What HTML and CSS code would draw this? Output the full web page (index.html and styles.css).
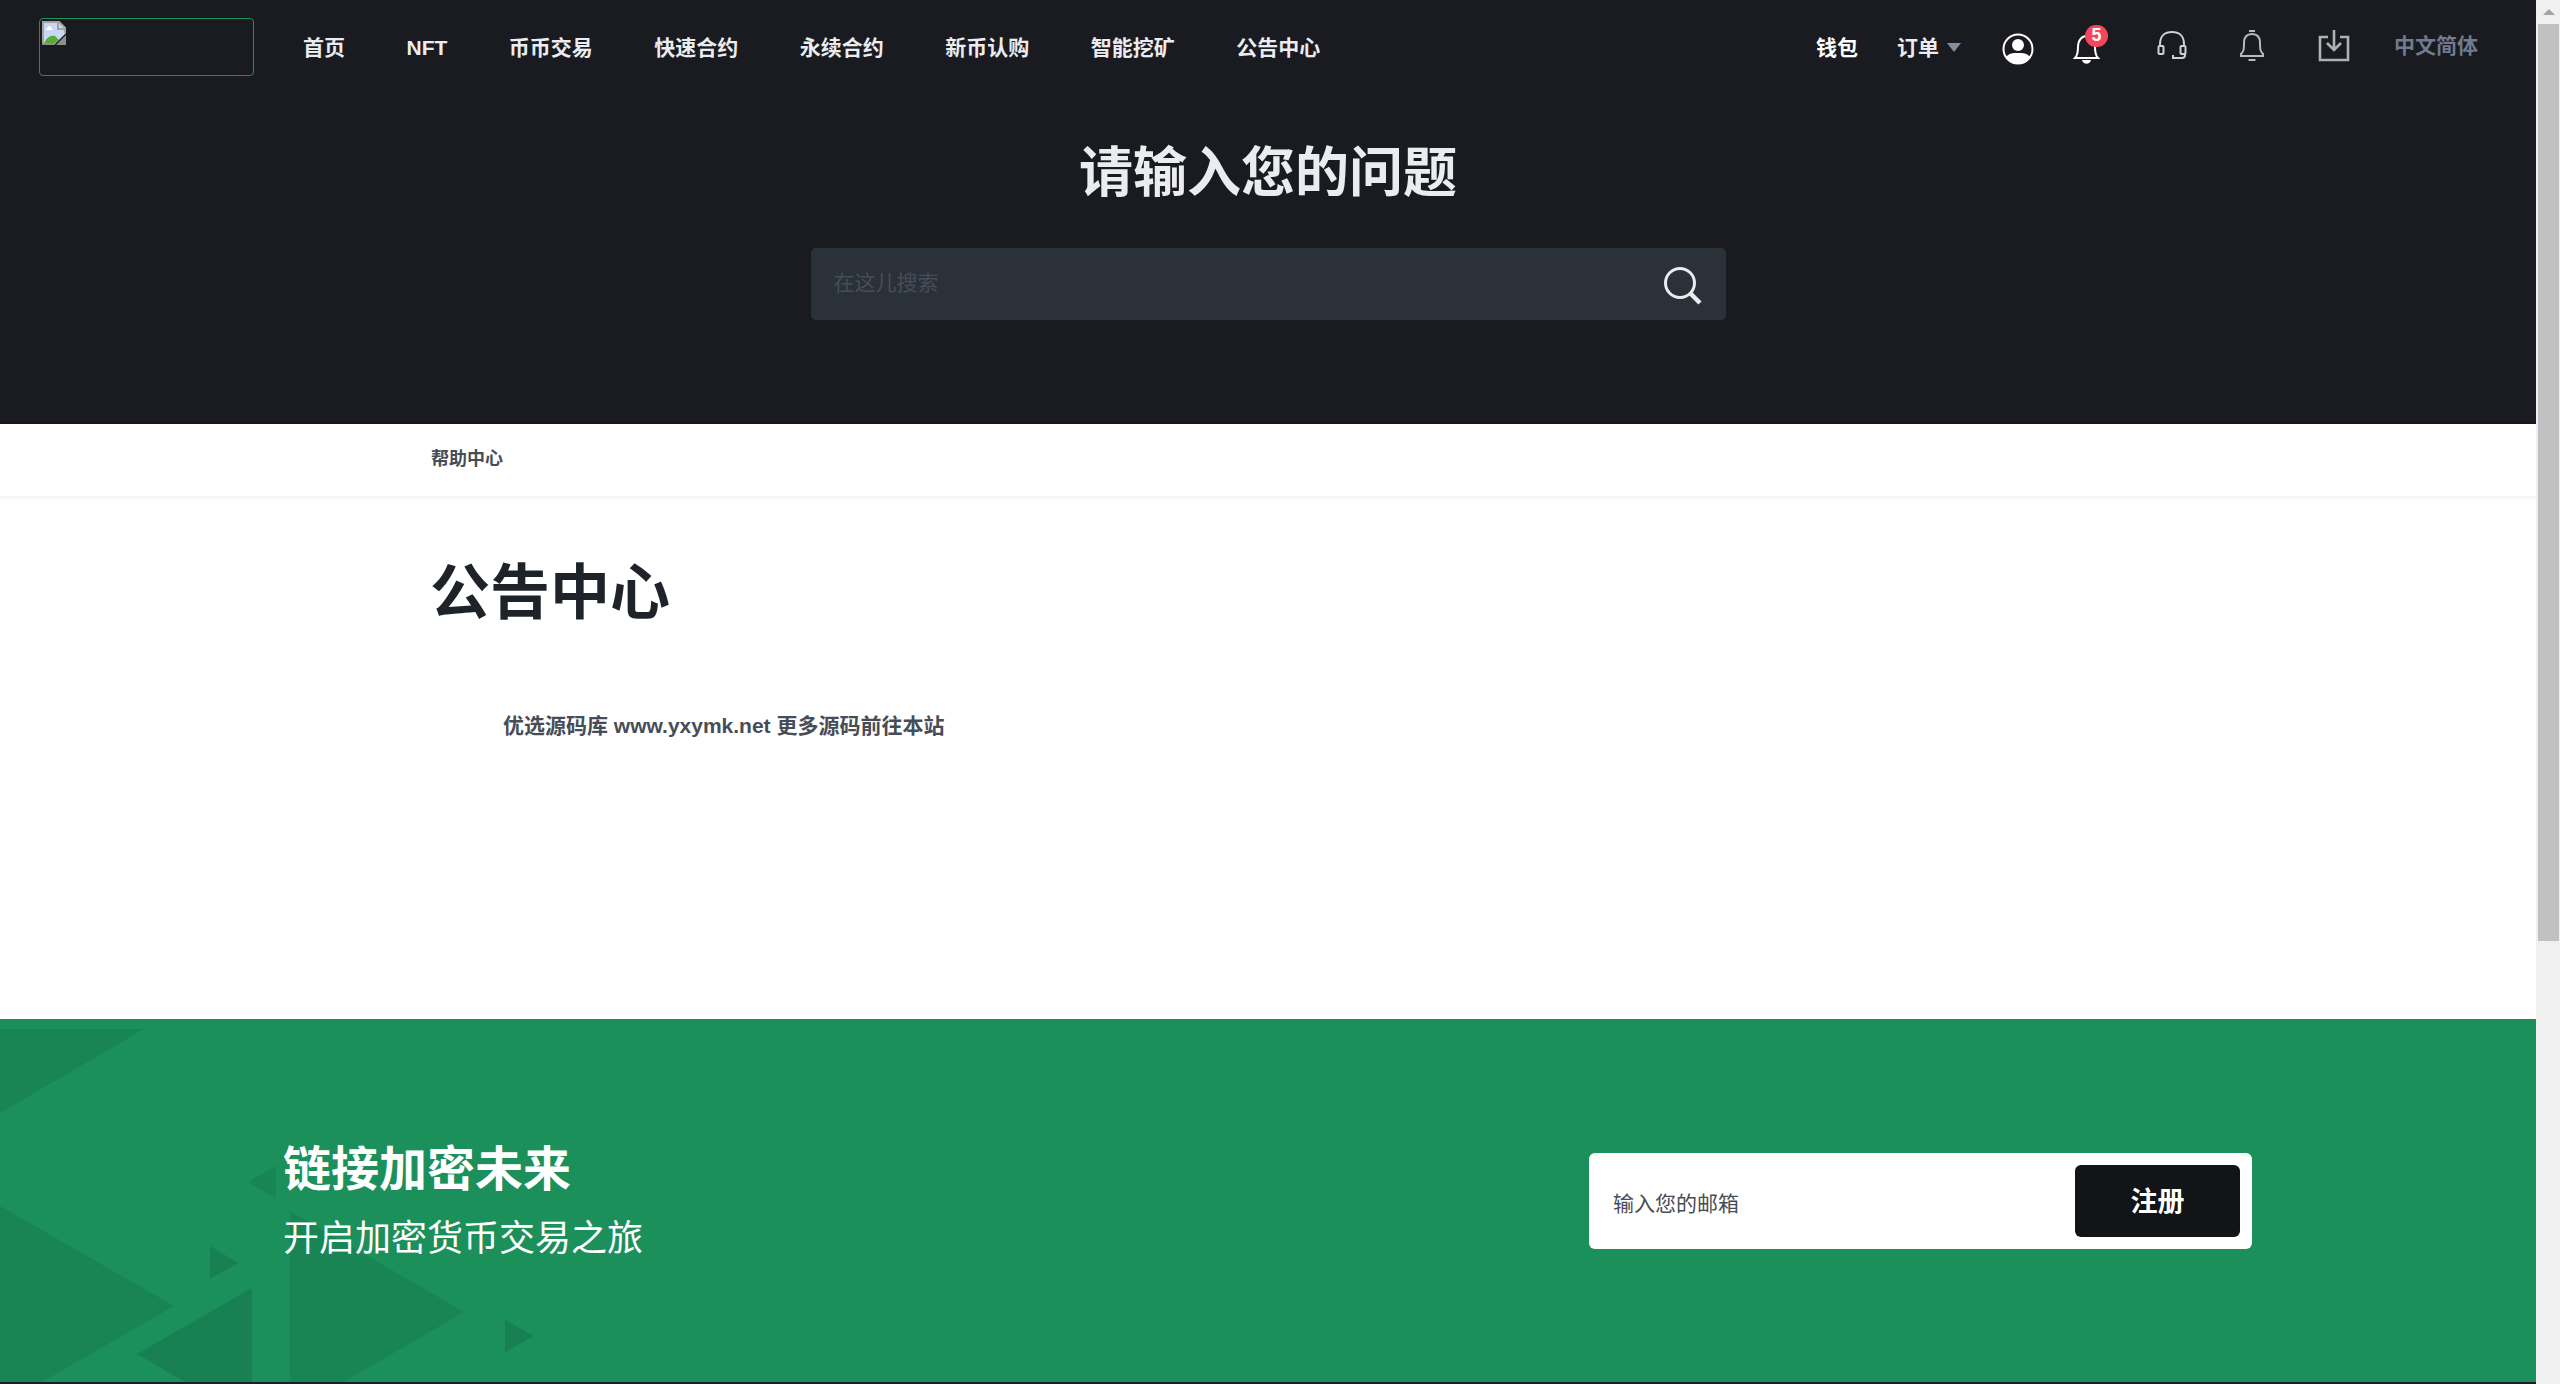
FILE: index.html
```html
<!doctype html>
<html lang="zh-CN">
    <head>
        <meta charset="UTF-8" />
        <meta name="viewport" content="width=device-width, initial-scale=1.0" />
        <title>公告中心</title>
        <link rel="stylesheet" href="styles.css">
    </head>
    <body>
        <div class="page">
            <header class="navbar">
                <a href="#" class="logo">
                    <svg width="24" height="24" viewBox="0 0 24 24">
                        <path d="M0 0h17l7 7v5L12 24H0z" fill="#c9d8f2" />
                        <path d="M2 23c2-6 6-9 11-8l4 4-5 4z" fill="#5aaa33" />
                        <path d="M4 9c0-2 2-2 3-4 2 0 2 2 4 4z" fill="#fff" />
                        <path d="M1 24V1h16l6 6v5M16 1v7h7" fill="none" stroke="#a3a3a3" stroke-width="2" />
                        <path d="M24 14v10H14z" fill="#8b9088" />
                        <path d="M0 23h12" stroke="#8b9088" stroke-width="2" />
                    </svg>
                </a>
                <nav class="menu">
                    <a href="#">首页</a>
                    <a href="#">NFT</a>
                    <a href="#">币币交易</a>
                    <a href="#">快速合约</a>
                    <a href="#">永续合约</a>
                    <a href="#">新币认购</a>
                    <a href="#">智能挖矿</a>
                    <a href="#">公告中心</a>
                </nav>
                <div class="tools">
                    <a href="#" class="wallet">钱包</a>
                    <a href="#" class="orders">订单<span class="caret"></span></a>
                    <a href="#" class="user">
                        <svg width="32" height="32" viewBox="0 0 32 32">
                            <circle cx="16" cy="16" r="14.5" fill="none" stroke="#fff" stroke-width="2" />
                            <circle cx="16" cy="12" r="6" fill="#fff" />
                            <path d="M4 24c3-4 7-4 12-4s9 0 12 4c-3 5-7 7-12 7s-9-2-12-7z" fill="#fff" />
                        </svg>
                    </a>
                    <a href="#" class="notice">
                        <svg width="28" height="32" viewBox="0 0 28 32">
                            <path d="M2 25c3-3 3-7 3-11 0-7 4-11 8.500-11S22 7 22 14c0 4 0 8 3 11z" fill="none" stroke="#fff" stroke-width="2" />
                            <path d="M9 27h9c-1 5-8 5-9 0z" fill="#fff" />
                        </svg>
                        <span class="badge">5</span>
                    </a>
                    <a href="#" class="service">
                        <svg width="32" height="32" viewBox="0 0 32 32" fill="none" stroke="#d0d1d2" stroke-width="2">
                            <path d="M4 16v-2C4 6 9 2 16 2s12 4 12 12v2" />
                            <rect x="2.500" y="16" width="5" height="8" rx="1" />
                            <rect x="24.500" y="16" width="5" height="8" rx="1" />
                            <path d="M29 23v2c0 2-1 3-3 3h-9v-3" />
                        </svg>
                    </a>
                    <a href="#" class="bell">
                        <svg width="28" height="34" viewBox="0 0 28 34" fill="none" stroke="#b9babb" stroke-width="2">
                            <path d="M3 27v-2c3-3 3-5 3-11 0-6 3-9 8-9s8 3 8 9c0 6 0 8 3 11v2zM11 2h6M10.500 31h7" />
                        </svg>
                    </a>
                    <a href="#" class="download">
                        <svg width="32" height="34" viewBox="0 0 32 34" fill="none" stroke="#b0b1b2" stroke-width="2.6">
                            <path d="M10 8H2v23h28V8h-8M16 1v20M9 14l7 7 7-7" />
                        </svg>
                    </a>
                    <a href="#" class="lang">中文简体</a>
                </div>
            </header>

            <section class="banner">
                <h1>请输入您的问题</h1>
                <form class="search">
                    <input type="text" placeholder="在这儿搜索" />
                    <svg width="40" height="40" viewBox="0 0 40 40" fill="none" stroke="#eaecef">
                        <circle cx="17" cy="17" r="14.500" stroke-width="3" />
                        <path d="M27 27l10 10" stroke-width="4.500" />
                    </svg>
                </form>
            </section>

            <div class="crumb">帮助中心</div>

            <main class="content">
                <h2>公告中心</h2>
                <a href="#">优选源码库 www.yxymk.net 更多源码前往本站</a>
            </main>

            <section class="join">
                <svg class="shapes" width="560" height="363" viewBox="0 0 560 363">
                    <path d="M0 10h144L0 94z" fill="#198555" />
                    <path d="M0 187l174 100L42 363H0z" fill="#198555" />
                    <path d="M276 147v32l-28-16z" fill="#198555" />
                    <path d="M210 227v33l28-16z" fill="#198053" />
                    <path d="M252 269v94h-67l-48-28z" fill="#198053" />
                    <path d="M290 192v171h54l120-70z" fill="#198555" />
                    <path d="M505 301v32l29-16z" fill="#198053" />
                </svg>
                <div class="slogan">
                    <h3>链接加密未来</h3>
                    <p>开启加密货币交易之旅</p>
                </div>
                <form class="signup">
                    <input type="text" placeholder="输入您的邮箱" />
                    <button type="button">注册</button>
                </form>
            </section>
            <footer class="footer"></footer>
        </div>
        <div class="scrollbar">
            <span class="arrow"></span>
            <span class="thumb"></span>
        </div>
    </body>
</html>
```

FILE: styles.css
```css
* {
    box-sizing: border-box;
}
body {
    margin: 0;
    height: 1384px;
    overflow: hidden;
    display: flex;
    font-family: "Liberation Sans", "Noto Sans CJK SC", sans-serif;
    background-color: #fff;
}
a {
    color: inherit;
    text-decoration: none;
}
svg {
    display: block;
}
h1,
h2,
h3,
p {
    margin: 0;
}
input {
    border: none;
    outline: none;
    background: none;
    font-family: inherit;
}
.page {
    width: 2536px;
    display: flex;
    flex-direction: column;
}
.navbar {
    height: 94px;
    display: flex;
    align-items: center;
    padding-left: 39px;
    background-color: #1a1b20;
    color: #eaecef;
    font-size: 21px;
    font-weight: bold;
}
.logo {
    width: 215px;
    height: 58px;
    padding: 2px;
    border: 1px solid #1c905b;
    border-radius: 4px;
}
.menu {
    display: flex;
    align-items: baseline;
    gap: 61.5px;
    margin: 0 0 3px 49px;
}
.tools {
    display: flex;
    align-items: center;
    margin-left: auto;
    padding-right: 58px;
}
.wallet {
    color: #fff;
    margin: 0 39px 3px 0;
}
.orders {
    display: flex;
    align-items: center;
    margin: 0 41px 3px 0;
}
.caret {
    margin: 4px 0 0 8px;
    border: 7px solid transparent;
    border-top: 9px solid #848e9c;
    border-bottom: none;
}
.user {
    margin: 4px 39px 0 0;
}
.notice {
    position: relative;
    margin: 4px 55px 0 0;
}
.badge {
    position: absolute;
    left: 12px;
    top: -8px;
    width: 23px;
    height: 22px;
    border-radius: 11px;
    background-color: #f6465d;
    color: #fff;
    font-size: 18px;
    line-height: 21px;
    text-align: center;
}
.service {
    margin: 0 50px 3px 0;
}
.bell {
    margin: 0 52px 2px 0;
}
.download {
    margin: 0 44px 2px 0;
}
.lang {
    margin-bottom: 6px;
    color: #717a8f;
}
.banner {
    height: 330px;
    padding-top: 39px;
    display: flex;
    flex-direction: column;
    align-items: center;
    background-color: #1a1b20;
    border-bottom: 2px solid #1b1420;
}
.banner h1 {
    font-size: 54px;
    line-height: 80px;
    color: #eaecef;
}
.search {
    width: 915px;
    height: 72px;
    margin-top: 35px;
    padding: 0 23px;
    display: flex;
    align-items: center;
    justify-content: space-between;
    border-radius: 5px;
    background-color: #2b3139;
}
.search input {
    width: 700px;
    padding: 0 0 3px;
    font-size: 21px;
}
.search svg {
    margin-top: 4px;
}
.search input::placeholder {
    color: #474d57;
}
.crumb {
    height: 72px;
    padding-left: 431px;
    font-size: 18px;
    line-height: 71px;
    font-weight: bold;
    color: #474d57;
    box-shadow: 0 2px 5px rgba(0, 0, 0, 0.06);
}
.content {
    height: 523px;
    padding: 54px 0 0 430px;
    color: #474d57;
    font-size: 21px;
    font-weight: bold;
}
.content h2 {
    font-size: 60px;
    line-height: 88px;
    color: #1e2329;
}
.content a {
    display: block;
    margin: 72px 0 0 73px;
    line-height: 32px;
}
.join {
    position: relative;
    height: 363px;
    display: flex;
    justify-content: space-between;
    padding: 0 284px 0 283px;
    background-color: #1c905b;
    color: #fff;
}
.shapes {
    position: absolute;
    left: 0;
    top: 0;
}
.slogan {
    position: relative;
    padding-top: 115px;
}
.slogan h3 {
    font-size: 48px;
    line-height: 72px;
}
.slogan p {
    font-size: 36px;
    line-height: 66px;
}
.signup {
    width: 663px;
    height: 96px;
    margin-top: 133.5px;
    padding: 0 12px 0 24px;
    display: flex;
    align-items: center;
    justify-content: space-between;
    border-radius: 6px;
    background-color: #fff;
}
.signup input {
    width: 420px;
    padding: 6px 0 0;
    font-size: 21px;
}
.signup input::placeholder {
    color: #474d57;
}
.signup button {
    width: 165px;
    height: 72px;
    padding: 0 0 2px;
    border: none;
    border-radius: 6px;
    background-color: #131417;
    color: #fff;
    font-family: inherit;
    font-size: 27px;
    font-weight: bold;
}
.footer {
    flex: 1;
    background-color: #221d24;
}
.scrollbar {
    width: 24px;
    padding-left: 2px;
    background-color: #f0f0f0;
}
.arrow {
    display: block;
    width: 12px;
    margin: 9px 0 9px 5px;
    border: 6px solid transparent;
    border-top: none;
    border-bottom: 6px solid #a3a3a3;
}
.thumb {
    display: block;
    width: 21px;
    height: 917px;
    background-color: #c1c1c1;
}
```
